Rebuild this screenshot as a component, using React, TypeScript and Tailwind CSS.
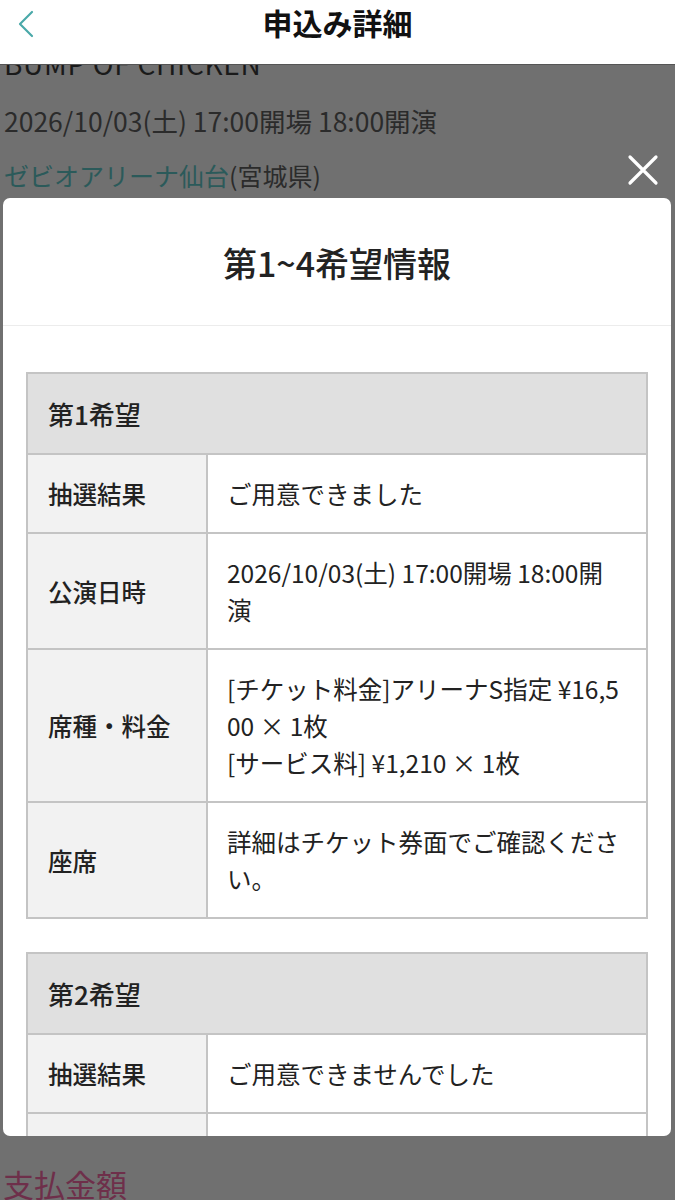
import React from "react";

const font = { fontFamily: '"Noto Sans CJK JP", "Noto Sans", sans-serif' };

type Row = { label: string; value: React.ReactNode };

function Wish({ title, rows }: { title: string; rows: Row[] }) {
  return (
    <table className="w-full table-fixed border-collapse border-2 border-[#c4c4c4] text-[#222]">
      <colgroup>
        <col className="w-[180px]" />
        <col />
      </colgroup>
      <tbody>
        <tr>
          <th
            colSpan={2}
            className="bg-[#e0e0e0] border-2 border-[#c4c4c4] text-left font-medium text-[26px] leading-[37px] pl-[20px] py-[21px]"
          >
            {title}
          </th>
        </tr>
        {rows.map((r, i) => (
          <tr key={i}>
            <td className="bg-[#f2f2f2] border-2 border-[#c4c4c4] align-middle pl-[20px] text-[24.5px] leading-[37px] font-medium py-[20px]">
              {r.label}
            </td>
            <td className="bg-white border-2 border-[#c4c4c4] align-middle pl-[19px] pr-[22px] text-[24.5px] leading-[37px] py-[20px] break-all">
              {r.value}
            </td>
          </tr>
        ))}
      </tbody>
    </table>
  );
}

export default function App() {
  return (
    <div className="relative w-[675px] h-[1200px] overflow-hidden bg-[#707070]" style={font}>
      {/* header */}
      <div className="relative z-10 h-[65px] bg-white border-b border-[#555] flex items-start justify-center">
        <button className="absolute left-[12px] top-[8px] w-[28px] h-[32px] flex items-center justify-center">
          <svg width="20" height="28" viewBox="0 0 20 28" fill="none">
            <path d="M16 2 L4 14 L16 26" stroke="#4aa9a9" strokeWidth="2.2" strokeLinecap="round" strokeLinejoin="round" />
          </svg>
        </button>
        <h1 className="mt-[2px] text-[30px] leading-[40px] font-bold text-[#111]">申込み詳細</h1>
      </div>

      {/* underlying page content (dimmed) */}
      <div className="-mt-[20px] pl-[4px]">
        <div className="text-[28px] leading-[36px] text-[#1a1a1a] tracking-wide">BUMP OF CHICKEN</div>
        <div className="mt-[22px] text-[26.5px] leading-[36px] text-[#2b2b2b]">2026/10/03(土) 17:00開場 18:00開演</div>
        <div className="mt-[18px] text-[25px] leading-[36px] text-[#2b2b2b]">
          <span className="text-[#2b5a5a]">ゼビオアリーナ仙台</span>(宮城県)
        </div>
      </div>

      {/* close button */}
      <button className="absolute left-[624px] top-[151px] w-[38px] h-[38px] flex items-center justify-center">
        <svg width="32" height="32" viewBox="0 0 32 32">
          <path d="M3 3 L29 29 M29 3 L3 29" stroke="#ffffff" strokeWidth="3.2" strokeLinecap="round" />
        </svg>
      </button>

      {/* modal */}
      <div className="absolute left-[3px] top-[198px] w-[668px] h-[938px] bg-white rounded-[7px] overflow-hidden flex flex-col">
        <div className="h-[128px] flex items-center justify-center border-b border-[#ececec] shrink-0">
          <h2 className="text-[34px] leading-[42px] font-medium text-[#222] mt-[3px]">第1~4希望情報</h2>
        </div>
        <div className="px-[23px] pt-[46px] flex flex-col gap-[33px]">
          <Wish
            title="第1希望"
            rows={[
              { label: "抽選結果", value: "ご用意できました" },
              { label: "公演日時", value: "2026/10/03(土) 17:00開場 18:00開演" },
              {
                label: "席種・料金",
                value: (
                  <>
                    <div>[チケット料金]アリーナS指定 ¥16,500 × 1枚</div>
                    <div>[サービス料] ¥1,210 × 1枚</div>
                  </>
                ),
              },
              { label: "座席", value: "詳細はチケット券面でご確認ください。" },
            ]}
          />
          <Wish
            title="第2希望"
            rows={[
              { label: "抽選結果", value: "ご用意できませんでした" },
              { label: "公演日時", value: "2026/10/03(土) 17:00開場 18:00開演" },
            ]}
          />
        </div>
      </div>

      {/* below modal */}
      <div className="absolute left-[3px] top-[1164px] text-[31px] leading-[40px] text-[#6e2f4a]">支払金額</div>
    </div>
  );
}
